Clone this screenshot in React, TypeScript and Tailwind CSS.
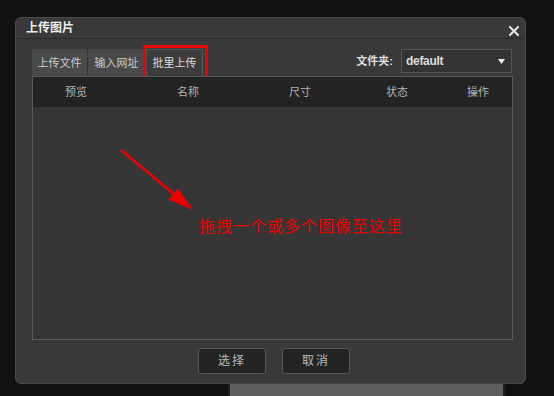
import React from "react";

const font = "font-['Liberation_Sans','Noto_Sans_CJK_SC',sans-serif]";

export default function App() {
  return (
    <div className={`w-[554px] h-[396px] overflow-hidden bg-[#111111] pt-[17px] ${font}`}>
      <div className="ml-[15px] w-[511px] h-[367px] rounded-[6px] border border-[#4a4a4a] bg-[#393939] flex flex-col">
        {/* title bar */}
        <div className="h-[21px] flex items-center justify-between pl-[10px] pr-[6px] border-b border-[#2a2a2a]">
          <span className="text-[12px] leading-[14px] font-bold text-[#eeeeee]">上传图片</span>
          <svg width="10" height="10" viewBox="0 0 10 10" className="mt-[6px]">
            <path d="M1 1 L9 9 M9 1 L1 9" stroke="#e6e6e6" strokeWidth="2" strokeLinecap="square" />
          </svg>
        </div>
        {/* body */}
        <div className="flex-1 flex flex-col pt-[10px] pl-[16px] pr-[12px] pb-[9px]">
          <div className="h-[27px] flex items-stretch justify-between">
            <div className="flex items-stretch">
              <div className="w-[56px] flex items-center justify-center bg-[#4a4a4a] border-r border-[#333] text-[11px] leading-[12px] text-[#cccccc]">上传文件</div>
              <div className="w-[57px] flex items-center justify-center bg-[#4a4a4a] text-[11px] leading-[12px] text-[#cccccc]">输入网址</div>
              <div className="relative ml-[1px] w-[57px] flex items-center justify-center bg-[#3c3c3c] border border-b-0 border-[#555] text-[11px] leading-[12px] text-[#dddddd]">
                批里上传
                <div className="absolute left-[-4px] right-[-6px] top-[-5px] bottom-[-7px] border-[3px] border-[#ee0000]" />
              </div>
            </div>
            <div className="flex items-start">
              <span className="mt-[6px] mr-[8px] text-[11px] leading-[12px] font-bold text-[#dddddd]">文件夹:</span>
              <div className="mr-[1px] w-[111px] h-[24px] flex items-center justify-between pl-[4px] pr-[6px] bg-[#333333] border border-[#555555]">
                <span className="text-[12px] leading-[14px] font-bold text-[#dddddd] tracking-[-0.3px]">default</span>
                <svg width="7" height="5" viewBox="0 0 7 5">
                  <path d="M0 0 L7 0 L3.5 5 Z" fill="#eeeeee" />
                </svg>
              </div>
            </div>
          </div>
          {/* table */}
          <div className="relative h-[264px] border border-[#5a5a5a] bg-[#363636] flex flex-col">
            <div className="h-[30px] bg-[#232323] grid grid-cols-[86px_138px_86px_108px_54px] items-center text-[11px] leading-[12px] text-[#b4b4b4]">
              <span className="text-center">预览</span>
              <span className="text-center">名称</span>
              <span className="text-center">尺寸</span>
              <span className="text-center">状态</span>
              <span className="text-center">操作</span>
            </div>
            <div className="flex-1 pt-[108px] pl-[166px]">
              <span className="text-[16px] leading-[18px] tracking-[1px] text-[#ee0000] font-['Noto_Sans_CJK_SC',sans-serif]">拖拽一个或多个图像至这里</span>
            </div>
            <svg className="absolute left-0 top-[30px]" width="200" height="120" viewBox="0 0 200 120">
              <line x1="88" y1="43" x2="142" y2="88" stroke="#ee0000" strokeWidth="2.5" />
              <path d="M160 103 L135.5 92.5 L145 81.5 Z" fill="#ee0000" />
            </svg>
          </div>
          {/* buttons */}
          <div className="mt-[8px] flex justify-center gap-[16px] pl-[3px]">
            <button className="w-[68px] h-[26px] rounded-[3px] bg-[#242424] border border-[#5a5a5a] text-[12px] leading-[14px] tracking-[2px] text-[#bbbbbb]">选择</button>
            <button className="w-[68px] h-[26px] rounded-[3px] bg-[#242424] border border-[#5a5a5a] text-[12px] leading-[14px] tracking-[2px] text-[#bbbbbb]">取消</button>
          </div>
        </div>
      </div>
      <div className="ml-[228px] w-[277px] h-[12px] bg-[#5e5e5e] border-x-2 border-[#1e1e1e]" />
    </div>
  );
}
